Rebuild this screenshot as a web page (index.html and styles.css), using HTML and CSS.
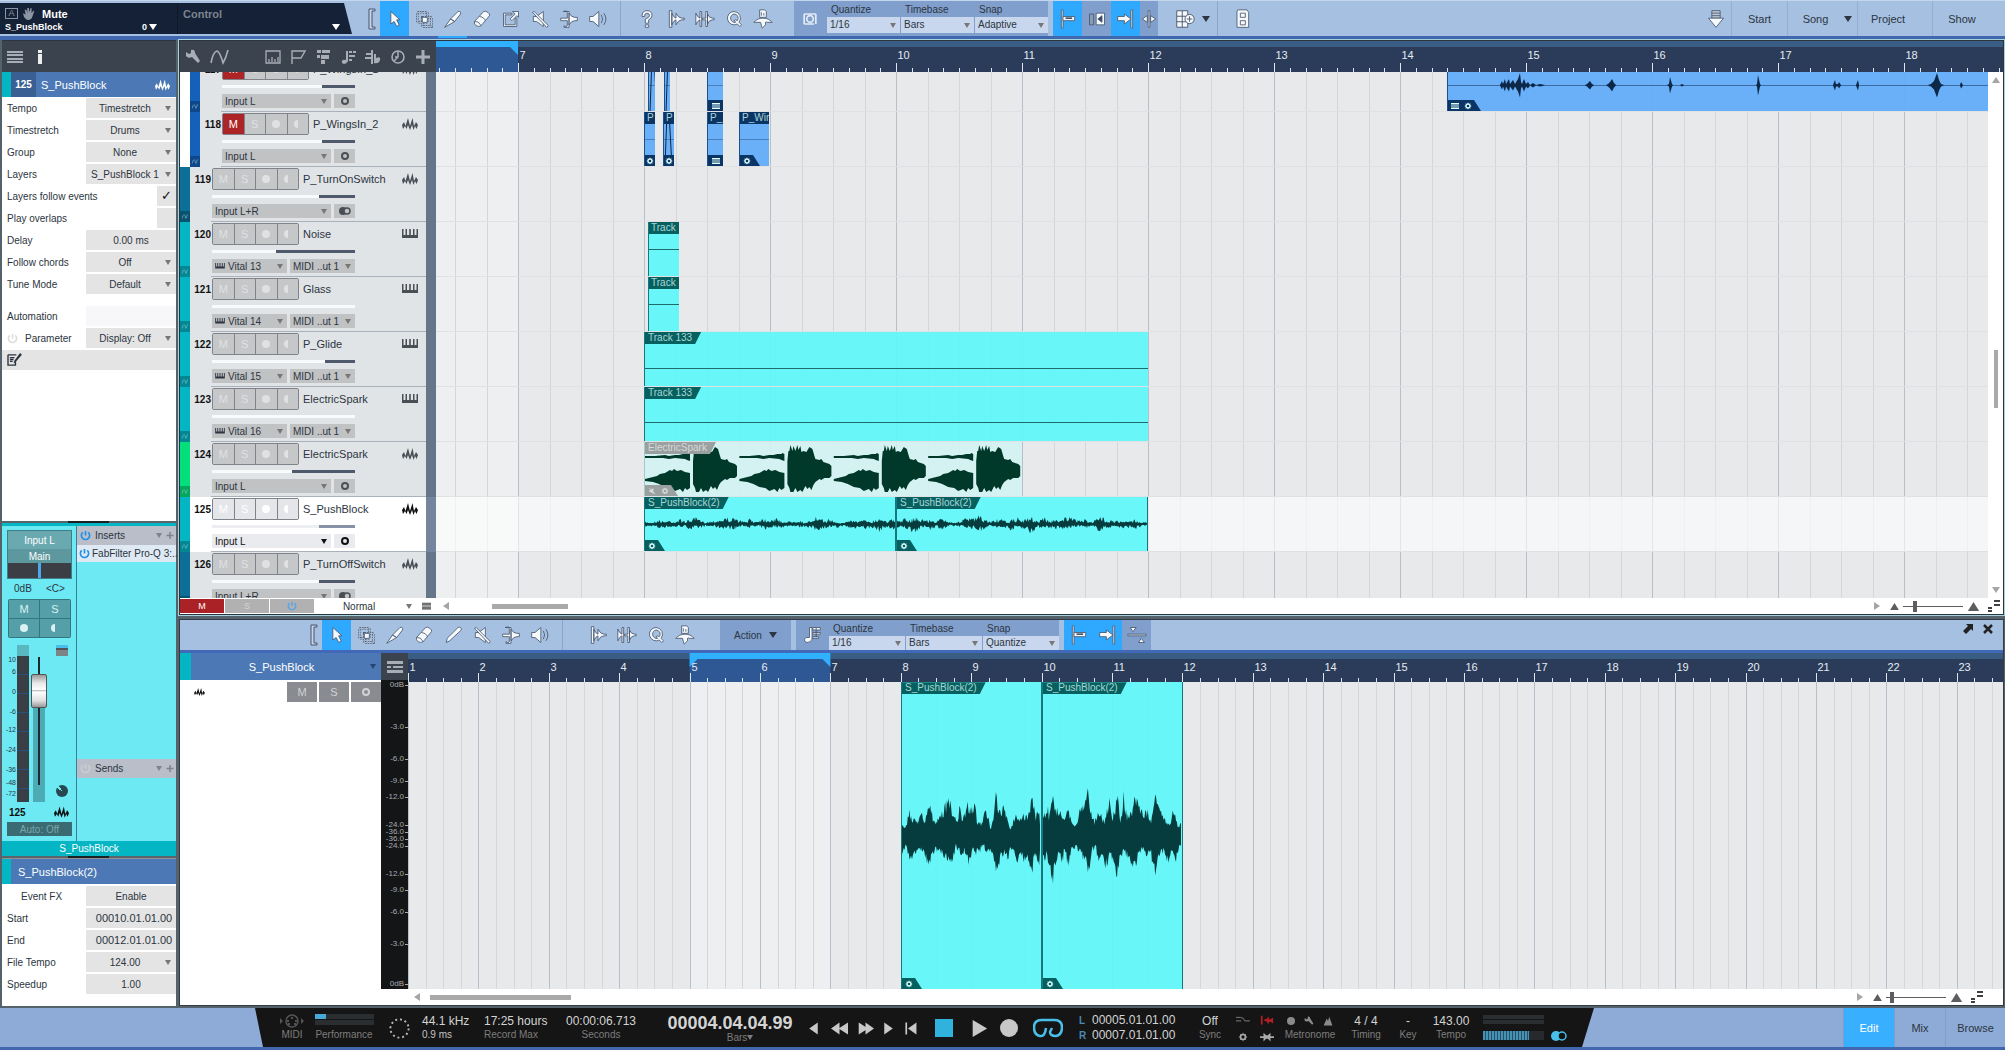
FILE: index.html
```html
<!DOCTYPE html>
<html lang="en">
  <head>
    <meta charset="UTF-8" />
    <title>S_PushBlock</title>
    <link rel="stylesheet" href="styles.css">
  </head>
  <body>
    <svg class="sprite" aria-hidden="true">
      <symbol id="i-bracket" viewBox="0 0 10 24"><path d="M8 2H2v20h6v-2H5V4h3z"/></symbol>
      <symbol id="i-cursor" viewBox="0 0 24 24"><path d="M7 3v15l4-3 3 6 3-2-3-6h4z"/></symbol>
      <symbol id="i-range" viewBox="0 0 24 24"><path d="M4 4h12v12H4z M10 10h11v11H10z" stroke-dasharray="2 1" fill="none" stroke-width="3"/><path d="M4 4h12v12H4z M10 10h11v11H10z" stroke-dasharray="2 1" fill="none" stroke="#dfe8f4" stroke-width="1"/><path d="M10 10h6v6h-6z"/></symbol>
      <symbol id="i-knife" viewBox="0 0 24 24"><path d="M2 22l7-10 5 3zM9 12l9-9q4-1 3 3l-7 9z"/></symbol>
      <symbol id="i-eraser" viewBox="0 0 24 24"><path d="M3 15L14 3q2-1 5 1t2 4L11 20q-3 2-6 0t-2-5zM9 9q6 1 7 5M3 15q5-1 8 5"/></symbol>
      <symbol id="i-pencil" viewBox="0 0 24 24"><path d="M4 21l1-5L18 3q2-1 3 0t1 3L8 19z"/></symbol>
      <symbol id="i-paint" viewBox="0 0 24 24"><path d="M3 5h10v2H5v12h12v-8h2v10H3z"/><path d="M14 3h7v7l-2-2-6 6-2-2 6-6z"/></symbol>
      <symbol id="i-mute" viewBox="0 0 24 24"><path d="M4 9h4l8-6v18l-8-6H4z"/><path d="M3 4l2-1 17 17-2 2z"/></symbol>
      <symbol id="i-bend" viewBox="0 0 24 24"><path d="M5 3q5-2 5 2v6H2v3h8v6q-2 3-4 0v2h6V5q3 5 7 5h3v4h-3q-4 0-7 5V3z"/></symbol>
      <symbol id="i-listen" viewBox="0 0 24 24"><path d="M2 9h4l7-6v18l-7-6H2z"/><path d="M16 7q3 5 0 10M19 5q5 7 0 14" fill="none"/></symbol>
      <symbol id="i-help" viewBox="0 0 24 24"><path d="M6 9q0-7 6-7t6 6q0 3-4 5v4h-4v-5q5-2 5-4 0-3-3-3t-3 4zM10 19h4v3h-4z"/></symbol>
      <symbol id="i-trans" viewBox="0 0 24 24"><path d="M4 2h3v20H4zM7 5q2 5 5 6V5q3 6 7 6h3v2h-3q-4 0-7 6v-6q-3 1-5 6z"/></symbol>
      <symbol id="i-strip" viewBox="0 0 24 24"><path d="M1 5q2 5 5 6V3h2v18H6v-8q-3 1-5 6zM9 11h4V3h2v18h-2v-8H9zM15 6q2 5 6 5h2v2h-2q-4 0-6 5z"/></symbol>
      <symbol id="i-q" viewBox="0 0 24 24"><path fill-rule="evenodd" d="M12 3a8 8 0 0 1 6 13l3 3-2 2-3-3A8 8 0 1 1 12 3zm0 3a5 5 0 1 0 2 10l-2-2 2-1 2 1a5 5 0 0 0-4-8z"/></symbol>
      <symbol id="i-bars" viewBox="0 0 24 24"><path d="M8 1h6l2 2v7H8z"/><path d="M10 4v4M13 5v3"/><path d="M1 16q4-5 11-5t11 5h-6q-1-1-2 0v3l-4 4-2-7H1z"/></symbol>
      <symbol id="i-down" viewBox="0 0 24 24"><path d="M7 2h10v9H7z" fill="#c0c9d6"/><path d="M7 5h10M7 8h10"/><path d="M7 11h10 4l-9 11-9-11z"/></symbol>
      <symbol id="i-iq" viewBox="0 0 24 24"><path d="M5 6v12M5 6h14M12 8a4 4 0 1 0 .1 0M19 6v12M5 18h12" fill="none" stroke-width="2" stroke="#e4ecf6"/></symbol>
      <symbol id="i-note" viewBox="0 0 24 24"><path d="M9 3h3v14q-1 4-6 4-4-1-3-4t6-2z"/><path d="M13 3h9v3h-9zM13 9h9v2h-9zM13 14h7v2h-7zM17 3v12"/></symbol>
      <symbol id="i-snapl" viewBox="0 0 24 24"><path d="M4 1h2v22H4z"/><path d="M6 9h14v5H6z"/><path d="M9 11h8" stroke-width="2"/></symbol>
      <symbol id="i-snapr" viewBox="0 0 24 24"><path d="M18 1h2v22h-2z"/><path d="M2 9h8V6l8 6-8 6v-4H2z"/></symbol>
      <symbol id="i-scroll" viewBox="0 0 24 24"><path d="M3 6h5v13H3z" fill="#8a9bb5"/><path d="M11 5h10v14H11z"/><path d="M18 8l-5 4 5 4z" fill="#3b4a60"/></symbol>
      <symbol id="i-split" viewBox="0 0 24 24"><path d="M11 2h2v20h-2zM4 12l6-4v8zM20 12l-6-4v8z"/></symbol>
      <symbol id="i-grid" viewBox="0 0 24 24"><path d="M3 3h12v18H3zM3 9h12M3 15h12M9 3v18"/><circle cx="17" cy="12" r="5"/><path d="M17 9v6M14 12h6"/></symbol>
      <symbol id="i-pads" viewBox="0 0 24 24"><path d="M7 1h11l2 3v18H6V3z"/><path d="M10 5h6v5h-6zM10 14h6v5h-6z"/></symbol>
      <symbol id="i-level" viewBox="0 0 24 24"><path d="M1 11h22v2H1zM4 3h7l-4 5zM14 21h7l-4-5z"/></symbol>
      <symbol id="i-wrench" viewBox="0 0 16 16"><path d="M1 3l3 2 2-1V1q4-1 4 3l5 8-2 2-6-6Q3 10 1 7z"/></symbol>
      <symbol id="i-curve" viewBox="0 0 20 16"><path d="M1 14Q3 3 7 2q3 1 6 12 3-5 5-13" fill="none" stroke="currentColor" stroke-width="1.6"/></symbol>
      <symbol id="i-ruler" viewBox="0 0 16 16"><path d="M1 2h14v12H1zM4 13v-3M7 13V8M10 13v-3M13 13V8" fill="none" stroke="currentColor" stroke-width="1.300"/></symbol>
      <symbol id="i-flag" viewBox="0 0 16 16"><path d="M2 15V2h13l-4 7H2" fill="none" stroke="currentColor" stroke-width="1.4"/></symbol>
      <symbol id="i-arr" viewBox="0 0 16 16"><path d="M2 1h4v3H2zM7 1h8v3H7zM6 6h8v4H6zM2 6h3v3H2zM6 11h4v4H6z"/></symbol>
      <symbol id="i-chord" viewBox="0 0 16 16"><path d="M6 2h2v9q0 3-4 4-3-1-2-3t4-1zM9 2h3v2H9zM13 2h3v2h-3zM9 6h6v2H9zM9 10h3v2H9z"/></symbol>
      <symbol id="i-sig" viewBox="0 0 16 16"><path d="M6 1h2v14H6zM1 4h5v2H1zM0 8h6v2H0zM9 5h2v4q5-2 4 2t-6 3z"/></symbol>
      <symbol id="i-clock" viewBox="0 0 16 16"><circle cx="8" cy="8" r="6" fill="none" stroke="currentColor" stroke-width="1.6"/><path d="M8 2v6l-4 4M8 8h-3" fill="none" stroke="currentColor" stroke-width="1.500"/></symbol>
      <symbol id="i-plus" viewBox="0 0 16 16"><path d="M6.500 1h3v5.500H15v3H9.500V15h-3V9.500H1v-3h5.500z"/></symbol>
      <symbol id="i-menu" viewBox="0 0 16 16"><path d="M0 2h16v2H0zM0 5h16v2H0zM0 9h16v2H0zM0 12h16v2H0z"/></symbol>
      <symbol id="i-info" viewBox="0 0 16 16"><path d="M6 1h4v3H6zM6 5h4v10H6z"/></symbol>
      <symbol id="i-wave" viewBox="0 0 16 12"><path d="M0 7l2-3 1.500 4L6 0l2 8 2.500-8 1.500 8 2-4 2 3-1.500 4-1.500-3-1.500 4L10 7l-2 5-2-5-1.500 4L3 8l-2 3z"/></symbol>
      <symbol id="i-keys" viewBox="0 0 16 10"><path d="M0 0h1.500v6h2V0H5v6h2.200V0h1.600v6H11V0h1.500v6h2V0H16v9H0z"/></symbol>
      <symbol id="i-power" viewBox="0 0 12 12"><path d="M3 2.5a4.5 4.5 0 1 0 6 0M6 1v5" fill="none" stroke="currentColor" stroke-width="1.8"/></symbol>
      <symbol id="i-hand" viewBox="0 0 14 14"><path d="M0 6l2 1 1 1-1-6h2l1 4V0h2v5l2-5h1l0 6 2-3 1 1-2 6q-1 4-5 4-3 0-5-4z"/></symbol>
      <symbol id="i-notes" viewBox="0 0 16 14"><path d="M1 2h9M1 2v11h8V9M3 5h5M3 7h4M3 9h3" fill="none" stroke="currentColor" stroke-width="1.500"/><path d="M14 0l2 2-7 8-2 1 1-3z"/></symbol>
      <symbol id="i-gear" viewBox="0 0 12 12"><circle cx="6" cy="6" r="3" fill="none" stroke="currentColor" stroke-width="2"/><path d="M6 1v2M6 9v2M1 6h2M9 6h2M2.500 2.500l1 1M8.500 8.500l1 1M9.500 2.500l-1 1M2.500 9.500l1-1" stroke="currentColor"/></symbol>
      <symbol id="i-tri" viewBox="0 0 10 8"><path d="M0 8h10L5 0z"/></symbol>
      <symbol id="i-zoomv" viewBox="0 0 12 12"><path d="M6 0h6v2H6zM6 4h6v2H6zM0 7h4v2H0zM0 10h4v2H0z"/></symbol>
    </svg>

    <header class="topbar">
      <div class="display">
        <div class="display-cell">
          <div class="display-row">
            <span class="box-a">A</span><svg class="hand"><use href="#i-hand"/></svg><b>Mute</b>
          </div>
          <div class="display-row small"><b>S_PushBlock</b><b class="end">0</b><i class="down"></i></div>
        </div>
        <div class="display-cell">
          <div class="display-row dim"><b>Control</b></div>
          <div class="display-row small"><i class="down end"></i></div>
        </div>
      </div>
      <div class="tools" data-tools="cursor range knife eraser paint mute bend listen | help trans strip q bars"></div>
      <div class="quant">
        <button class="quant-icon" aria-label="Input quantize"><svg><use href="#i-iq"/></svg></button>
        <label class="field">Quantize<span class="pick"><select><option>1/16</option></select></span></label>
        <label class="field">Timebase<span class="pick"><select><option>Bars</option></select></span></label>
        <label class="field">Snap<span class="pick"><select><option>Adaptive</option></select></span></label>
      </div>
      <div class="snaps">
        <button class="on" aria-label="Snap to grid"><svg><use href="#i-snapl"/></svg></button>
        <button aria-label="Autoscroll"><svg><use href="#i-scroll"/></svg></button>
        <button class="on" aria-label="Snap to events"><svg><use href="#i-snapr"/></svg></button>
        <button class="slim" aria-label="Split view"><svg><use href="#i-split"/></svg></button>
      </div>
      <button class="plain gridbtn" aria-label="Grid"><svg><use href="#i-grid"/></svg><i class="down"></i></button>
      <button class="plain padbtn" aria-label="Pads"><svg><use href="#i-pads"/></svg></button>
      <nav class="pages">
        <button class="plain" aria-label="Install"><svg><use href="#i-down"/></svg></button>
        <button>Start</button>
        <button class="song">Song <i class="down"></i></button>
        <button class="project">Project</button>
        <button class="show">Show</button>
      </nav>
    </header>

    <main class="workspace">
      <aside class="inspector">
        <div class="bar"><svg><use href="#i-menu"/></svg><svg class="lit"><use href="#i-info"/></svg></div>
        <h2 class="title"><b>125</b>S_PushBlock<svg><use href="#i-wave"/></svg></h2>
        <div class="props">
          <label>Tempo<span class="pick"><select><option>Timestretch</option></select></span></label>
          <label>Timestretch<span class="pick"><select><option>Drums</option></select></span></label>
          <label>Group<span class="pick"><select><option>None</option></select></span></label>
          <label>Layers<span class="pick"><select><option>S_PushBlock 1</option></select></span></label>
          <label>Layers follow events<input type="checkbox" checked></label>
          <label>Play overlaps<input type="checkbox"></label>
          <label>Delay<input type="text" value="0.00 ms"></label>
          <label>Follow chords<span class="pick"><select><option>Off</option></select></span></label>
          <label>Tune Mode<span class="pick"><select><option>Default</option></select></span></label>
          <label class="spaced">Automation<input class="faint" type="text" value=""></label>
          <label><span class="param"><svg><use href="#i-power"/></svg>Parameter</span><span class="pick"><select><option>Display: Off</option></select></span></label>
          <div class="notes"><svg><use href="#i-notes"/></svg></div>
        </div>
        <div class="grip"></div>
        <section class="channel">
          <div class="strip">
            <div class="io"><button>Input L</button><button>Main</button><div class="pan"></div></div>
            <div class="db"><span>0dB</span><span>&lt;C&gt;</span></div>
            <div class="ms"><button>M</button><button>S</button><button aria-label="Record"><i class="dot"></i></button><button aria-label="Monitor"><i class="half"></i></button></div>
            <div class="fader-area">
              <div class="fader-scale"></div>
              <div class="meter"></div>
              <input class="fader" type="range" min="0" max="127" value="108" aria-label="Volume">
              <div class="fader-side"><i class="bank"></i><i class="knob"></i></div>
            </div>
            <div class="strip-id"><b>125</b><svg><use href="#i-wave"/></svg></div>
            <button class="auto">Auto: Off</button>
          </div>
          <div class="rack">
            <div class="rack-head"><svg><use href="#i-power"/></svg>Inserts<i class="down end"></i><svg class="add"><use href="#i-plus"/></svg></div>
            <div class="insert"><svg><use href="#i-power"/></svg><span>FabFilter Pro-Q 3:..</span></div>
            <div class="rack-head sends"><svg><use href="#i-power"/></svg>Sends<i class="down end"></i><svg class="add"><use href="#i-plus"/></svg></div>
          </div>
          <div class="channel-name">S_PushBlock</div>
        </section>
        <div class="grip grey"></div>
        <h2 class="title event-title">S_PushBlock(2)</h2>
        <div class="props event-props">
          <label><span class="fx">Event FX</span><button>Enable</button></label>
          <label>Start<input class="time" type="text" value="00010.01.01.00"></label>
          <label>End<input class="time" type="text" value="00012.01.01.00"></label>
          <label>File Tempo<span class="pick"><select><option>124.00</option></select></span></label>
          <label>Speedup<input type="text" value="1.00"></label>
        </div>
      </aside>

      <section class="arrange">
        <div class="arrange-head">
          <div class="bar track-tools">
            <svg><use href="#i-wrench"/></svg><svg class="wide"><use href="#i-curve"/></svg>
            <svg class="end"><use href="#i-ruler"/></svg><svg><use href="#i-flag"/></svg><svg><use href="#i-arr"/></svg><svg><use href="#i-chord"/></svg><svg><use href="#i-sig"/></svg><svg><use href="#i-clock"/></svg><svg><use href="#i-plus"/></svg>
          </div>
          <svg class="ruler" id="arrangeRuler"></svg>
        </div>
        <div class="arrange-body">
          <div class="track-list" id="trackList"></div>
          <div class="lanes" id="lanes"></div>
          <div class="vscroll"><i class="up"></i><span></span><i class="down"></i></div>
        </div>
        <div class="arrange-foot">
          <button class="m">M</button><button>S</button><button aria-label="Automation power"><svg><use href="#i-power"/></svg></button>
          <span class="pick size"><select aria-label="Track height"><option>Normal</option></select></span>
          <svg class="list"><use href="#i-menu"/></svg>
          <div class="hscroll"><i class="left"></i><span></span><i class="right end"></i></div>
          <div class="zoom"><svg><use href="#i-tri"/></svg><input type="range" value="18" aria-label="Zoom"><svg class="big"><use href="#i-tri"/></svg><svg class="zv"><use href="#i-zoomv"/></svg></div>
        </div>
      </section>

      <section class="editor">
        <div class="editor-tools">
          <div class="tools" data-tools="cursor range knife eraser pencil mute bend listen | trans strip q bars"></div>
          <button class="action">Action <i class="down"></i></button>
          <div class="quant">
            <button class="quant-icon" aria-label="Note quantize"><svg><use href="#i-note"/></svg></button>
            <label class="field">Quantize<span class="pick"><select><option>1/16</option></select></span></label>
            <label class="field">Timebase<span class="pick"><select><option>Bars</option></select></span></label>
            <label class="field">Snap<span class="pick"><select><option>Quantize</option></select></span></label>
          </div>
          <div class="snaps">
            <button class="on" aria-label="Snap to grid"><svg><use href="#i-snapl"/></svg></button>
            <button class="on" aria-label="Snap to events"><svg><use href="#i-snapr"/></svg></button>
            <button aria-label="Level"><svg><use href="#i-level"/></svg></button>
          </div>
          <div class="window-buttons">
            <button aria-label="Detach"><svg viewBox="0 0 10 10"><path d="M3 0h7v7L8 5 3 10 0 7l5-5z"/></svg></button>
            <button aria-label="Close"><svg viewBox="0 0 10 10"><path d="M1 1l8 8M9 1L1 9" stroke="#222" stroke-width="2.500"/></svg></button>
          </div>
        </div>
        <div class="editor-body">
          <div class="editor-side">
            <h2>S_PushBlock<i class="down"></i></h2>
            <div class="editor-ms"><svg><use href="#i-wave"/></svg><button>M</button><button>S</button><button aria-label="Monitor"><i class="ring"></i></button></div>
          </div>
          <div class="db-col">
            <div class="bar"><svg viewBox="0 0 16 14"><path d="M0 1h16v3H0zM0 6h4v2H0zM6 6h10v2H6zM0 10h16v3H0z"/></svg></div>
            <div class="db-scale" id="dbScale"></div>
          </div>
          <div class="editor-view">
            <svg class="ruler" id="editorRuler"></svg>
            <div class="editor-lane" id="editorLane"></div>
            <div class="editor-foot">
              <div class="hscroll"><i class="left"></i><span></span><i class="right end"></i></div>
              <div class="zoom"><svg><use href="#i-tri"/></svg><input type="range" value="8" aria-label="Zoom"><svg class="big"><use href="#i-tri"/></svg><svg class="zv"><use href="#i-zoomv"/></svg></div>
            </div>
          </div>
        </div>
      </section>
    </main>

    <footer class="transport">
      <div class="transport-panel">
        <div class="cell midi"><svg viewBox="0 0 26 14"><circle cx="13" cy="7" r="6" fill="none" stroke="#555" stroke-width="1.500"/><path d="M1 4v6l3-3zM22 4v6l3-3z" fill="#555"/><g fill="#666"><circle cx="9" cy="7" r="1"/><circle cx="17" cy="7" r="1"/><circle cx="10" cy="10" r="1"/><circle cx="16" cy="10" r="1"/><circle cx="13" cy="4" r="1"/></g></svg><small>MIDI</small></div>
        <div class="cell perf"><span class="load"><i></i></span><small>Performance</small></div>
        <div class="cell circle"><svg viewBox="0 0 24 24"><circle cx="12" cy="12" r="9.500" fill="none" stroke="#bbb" stroke-width="2" stroke-dasharray="2 3"/></svg></div>
        <div class="cell left rate"><span>44.1 kHz</span><small class="bright">0.9 ms</small></div>
        <div class="cell left hours"><span>17:25 hours</span><small>Record Max</small></div>
        <div class="cell secs"><span>00:00:06.713</span><small>Seconds</small></div>
        <div class="cell counter"><strong>00004.04.04.99</strong><small>Bars<i class="down"></i></small></div>
        <div class="buttons">
          <button aria-label="Previous"><svg viewBox="0 0 20 20"><path d="M15 3v14L5 10z"/></svg></button>
          <button aria-label="Rewind"><svg viewBox="0 0 20 20"><path d="M10 3v14L0 10zM20 3v14L9 10z"/></svg></button>
          <button aria-label="Forward"><svg viewBox="0 0 20 20"><path d="M2 3v14l11-7zM10 3v14l10-7z"/></svg></button>
          <button class="b20" aria-label="Next"><svg viewBox="0 0 20 20"><path d="M5 3v14l10-7z"/></svg></button>
          <button class="b24" aria-label="Return to zero"><svg viewBox="0 0 20 20"><path d="M4 3h2v14H4zM17 3v14L7 10z"/></svg></button>
          <button class="b44" aria-label="Stop"><svg viewBox="0 0 20 20"><path d="M1 1h18v18H1z" fill="#2fb2dd"/></svg></button>
          <button aria-label="Play"><svg viewBox="0 0 20 20"><path d="M2 0v20l17-10z"/></svg></button>
          <button class="b34" aria-label="Record"><svg viewBox="0 0 20 20"><circle cx="10" cy="10" r="9"/></svg></button>
          <button class="b44 loop" aria-label="Loop"><svg viewBox="0 0 30 20"><path d="M7 18q5 1 6-8M7 18q-6-1-6-9 0-7 8-7h12q8 0 8 7 0 8-6 9-6 0-6-4l2-4" fill="none" stroke="#49c0ea" stroke-width="2.500"/></svg></button>
        </div>
        <div class="locators"><div><b>L</b>00005.01.01.00</div><div><b>R</b>00007.01.01.00</div></div>
        <div class="cell sync"><span>Off</span><small>Sync</small></div>
        <div class="mini">
          <svg viewBox="0 0 16 10"><path d="M0 2h5q4 0 5 4h6M0 6h6" fill="none" stroke="#888"/></svg>
          <svg viewBox="0 0 16 10"><path d="M1 0h2v10H1zM5 4h2l3-3v3h2l3-2v7l-3-2h-2v3L7 6H5z" fill="#b51f24"/></svg>
          <svg viewBox="0 0 12 12" color="#aaa"><use href="#i-gear"/></svg>
          <svg viewBox="0 0 16 10"><path d="M0 4h4V0l3 3h2l3-3v4h4v2h-4v4L9 7H7l-3 3V6H0z" fill="#aaa"/></svg>
        </div>
        <div class="cell metro"><span class="trio"><i class="dot"></i><svg><use href="#i-wrench"/></svg><svg viewBox="0 0 16 16"><path d="M1 15L6 4l2 4 2-7 5 14z"/></svg></span><small>Metronome</small></div>
        <div class="cell timing"><span>4 / 4</span><small>Timing</small></div>
        <div class="cell key"><span>-</span><small>Key</small></div>
        <div class="cell tempo"><span>143.00</span><small>Tempo</small></div>
        <div class="out"><span class="bars"></span><span class="vol"></span><svg viewBox="0 0 16 10"><circle cx="5" cy="5" r="5" fill="#49c0ea"/><circle cx="11" cy="5" r="4" fill="#151515" stroke="#49c0ea" stroke-width="1.500"/></svg></div>
      </div>
      <nav class="views"><button class="active">Edit</button><button>Mix</button><button>Browse</button></nav>
    </footer>
    <script src="script.js"></script>
  </body>
</html>
```

FILE: styles.css
```css
* {
  box-sizing: border-box;
}
body {
  margin: 0;
  height: 100vh;
  display: flex;
  flex-direction: column;
  overflow: hidden;
  background: #53626b;
  color: #2c3540;
  font: 10px "Liberation Sans", Arial, sans-serif;
}
.sprite {
  display: none;
}
svg {
  display: block;
  flex: none;
  fill: currentColor;
}
button, select, input {
  font: inherit;
  color: inherit;
  margin: 0;
  padding: 0;
  border: 0;
  border-radius: 0;
  background: none;
  appearance: none;
  min-width: 0;
}
button {
  display: flex;
  align-items: center;
  justify-content: center;
}
h2 {
  margin: 0;
  font-weight: normal;
  font-size: 11px;
}
.end {
  margin-left: auto;
}

/* little triangles */
i.down, i.up, i.left, i.right {
  width: 0;
  height: 0;
  flex: none;
  border: 4px solid transparent;
}
i.down {
  border-top: 6px solid;
  border-bottom: 0;
}
i.up {
  border-bottom: 6px solid;
  border-top: 0;
}
i.left {
  border-right: 6px solid;
  border-left: 0;
}
i.right {
  border-left: 6px solid;
  border-right: 0;
}
i.dot, i.half, i.ring {
  width: 8px;
  height: 8px;
  border-radius: 50%;
  background: currentColor;
}
i.half {
  background: linear-gradient(90deg, currentColor 50%, transparent 50%);
}
i.ring {
  background: none;
  border: 2px solid;
}
.pick {
  position: relative;
  display: flex;
}
.pick select {
  width: 100%;
  padding: 0 14px 0 3px;
}
.pick::after {
  content: "";
  position: absolute;
  right: 4px;
  top: 50%;
  margin-top: -2px;
  border: 3px solid transparent;
  border-top: 5px solid #777;
  border-bottom: 0;
  pointer-events: none;
}

/* top toolbar */
.topbar {
  display: flex;
  height: 40px;
  flex: none;
  background: #a6c0e2;
  border-top: 1px solid #c4d5ee;
  border-bottom: 4px solid #4167ae;
}
.display {
  display: flex;
  width: 352px;
  height: 31px;
  margin: 2px 12px 0 0;
  background: #152136;
  color: #fff;
  clip-path: polygon(0 0, 344px 0, 100% 100%, 0 100%);
}
.display-cell {
  width: 177px;
  padding: 4px 20px 0 5px;
}
.display-cell + .display-cell {
  border-left: 1px solid #0f1828;
  width: 175px;
  padding-right: 12px;
}
.display-row {
  display: flex;
  align-items: center;
  gap: 5px;
  height: 13px;
  font-size: 11px;
}
.display-row.small {
  font-size: 9px;
  gap: 2px;
}
.display-row.dim {
  color: #7c8490;
}
.box-a {
  width: 13px;
  height: 11px;
  border: 1px solid #8b95a3;
  color: #8b95a3;
  font-size: 9px;
  line-height: 9px;
  text-align: center;
}
.hand {
  width: 12px;
  height: 12px;
  margin-right: 2px;
  color: #8b95a3;
}
.tools {
  display: flex;
}
.tools button {
  width: 29px;
  height: 35px;
}
.tools button.bracket {
  width: 16px;
}
.tools button.on, .snaps .on {
  background: #2fa9ff;
}
.topbar .tools button[aria-label="knife"] {
  box-shadow: 0 2px #2fa9ff;
}
.tools svg, .quant-icon svg, .snaps svg, .plain svg {
  width: 20px;
  height: 20px;
  fill: #f6f9fc;
  stroke: #46556c;
  stroke-width: 1;
}
.tools .bracket svg {
  width: 10px;
  height: 24px;
  fill: #c6d5ea;
}
.tools hr {
  width: 1px;
  height: 100%;
  margin: 0 11px 0 8px;
  border: 0;
  background: #8ba6cd;
}
.quant {
  display: flex;
  gap: 1px;
  margin-left: 17px;
  background: #809fcd;
}
.quant-icon {
  width: 32px;
}
.field {
  width: 73px;
  padding: 2px 0 0 4px;
  line-height: 14px;
}
.field .pick {
  margin-left: -4px;
}
.field .pick select {
  height: 16px;
  background: #c8d7ed;
}
.snaps {
  display: flex;
  margin-left: 5px;
}
.snaps button {
  width: 29px;
  background: #809fcd;
}
.snaps .slim {
  width: 18px;
}
.gridbtn {
  width: 60px;
  gap: 6px;
  padding-left: 8px;
  border-right: 1px solid #8ba6cd;
}
.gridbtn svg {
  width: 22px;
  height: 22px;
}
.padbtn {
  width: 47px;
}
.pages {
  display: flex;
  margin-left: auto;
  font-size: 11px;
}
.pages button {
  width: 56px;
  border-left: 1px solid #94aed4;
}
.pages .plain {
  width: 30px;
  border: 0;
}
.pages .song {
  width: 70px;
  gap: 16px;
  padding-left: 10px;
}
.pages .project {
  width: 75px;
  padding-right: 14px;
}
.pages .show {
  width: 73px;
  padding-right: 14px;
}

/* panels */
.workspace {
  flex: 1;
  min-height: 0;
  display: grid;
  grid-template-columns: 175px 1fr;
  grid-template-rows: 299fr 201fr;
  gap: 4px 3px;
  padding: 0 1px 2px 1px;
}
.inspector {
  grid-row: 1 / 3;
  display: flex;
  flex-direction: column;
  min-width: 0;
  border-top: 1px solid #2d343c;
  margin-left: 1px;
  background: #fff;
}
.bar {
  display: flex;
  align-items: center;
  height: 31px;
  flex: none;
  background: #3b434f;
  color: #a9adb5;
}
.bar svg {
  width: 16px;
  height: 16px;
}
.inspector .bar {
  gap: 9px;
  padding-left: 5px;
}
.bar .lit {
  color: #eee;
}
.title {
  display: flex;
  align-items: center;
  height: 25px;
  flex: none;
  background: #4c79b5;
  border-left: 9px solid #04b5c4;
  color: #fff;
}
.title b {
  width: 25px;
  margin-right: 5px;
  background: #3a5f92;
  line-height: 25px;
  font-size: 10px;
  text-align: center;
}
.title svg {
  width: 15px;
  height: 12px;
  margin: 0 6px 0 auto;
}
.event-title {
  padding-left: 7px;
}
.props {
  flex: 1;
  display: flex;
  flex-direction: column;
  gap: 2px;
  padding-top: 1px;
}
.props label {
  display: flex;
  align-items: center;
  justify-content: space-between;
  height: 20px;
  padding-left: 5px;
}
.props .spaced {
  margin-top: 10px;
}
.props .pick, .props input, .props button {
  width: 90px;
  height: 20px;
  background: #e4e4e4;
  text-align: center;
}
.props .pick select {
  text-align-last: center;
  padding: 0 12px 0 0;
}
.props .pick::after {
  right: 5px;
  border-width: 5px 3px 0;
}
.props input[type="checkbox"] {
  width: 19px;
}
.props input[type="checkbox"]:checked::after {
  content: "✓";
  font: bold 13px/20px "DejaVu Sans", sans-serif;
  color: #111;
}
.props .faint {
  background: #f7f7f9;
}
.props .time {
  font-size: 11px;
  padding-left: 6px;
}
.param {
  display: flex;
  gap: 7px;
}
.param svg {
  width: 11px;
  height: 11px;
  color: #ddd;
}
.fx {
  padding-left: 14px;
}
.notes {
  height: 20px;
  padding: 3px 5px;
  background: #e4e4e4;
}
.notes svg {
  width: 15px;
  height: 13px;
}
.event-props {
  flex: none;
  height: 122px;
  padding-top: 2px;
}
.grip {
  height: 5px;
  flex: none;
  border-top: 2px dotted #222;
  border-image: linear-gradient(90deg, #59656b 38%, #1c2023 38%, #1c2023 61%, #59656b 61%) 2;
  background: #04b5c4;
}
.grip.grey {
  height: 3px;
  background: #8d9296;
}

/* channel strip */
.channel {
  flex: none;
  display: grid;
  grid-template-columns: 75px minmax(0, 1fr);
  grid-template-rows: 315px 15px;
  background: #6de9f4;
}
.strip {
  display: flex;
  flex-direction: column;
  padding: 4px 4px 0 5px;
  border-right: 1px solid #3a7f9a;
}
.io button {
  width: 100%;
  height: 18px;
  background: #69a9af;
  color: #fff;
}
.io button + button {
  height: 14px;
  background: #5d989f;
}
.io {
  border: 1px solid #3c7f88;
}
.pan {
  height: 15px;
  background: linear-gradient(90deg, #3b3f45 47%, #4fa8ec 47%, #4fa8ec 53%, #3b3f45 53%);
}
.db {
  display: flex;
  justify-content: space-around;
  padding: 4px 0;
  line-height: 12px;
}
.ms {
  display: grid;
  grid-template-columns: 1fr 1fr;
  gap: 1px;
  margin: 0 1px;
  padding: 1px;
  background: #34757f;
  border-radius: 2px;
}
.ms button {
  height: 18px;
  background: #55a0a8;
  color: #d9f1f3;
  font-size: 11px;
}
.fader-area {
  flex: 1;
  display: flex;
  padding-top: 7px;
}
.fader-scale {
  position: relative;
  width: 9px;
  font-size: 7px;
}
.fader-scale span {
  position: absolute;
  right: 0;
  line-height: 8px;
}
.meter {
  width: 12px;
  margin-left: 1px;
  border-top: 11px solid #59b7bf;
  background: repeating-linear-gradient(#3a3e45 0 18px, #27507c 18px 19px);
}
.fader {
  width: 16px;
  margin: 12px 0 0 2px;
  writing-mode: vertical-lr;
  direction: rtl;
  background: linear-gradient(90deg, transparent 7px, #1d2b30 7px, #1d2b30 9px, transparent 9px) no-repeat 0 0 / 100% 128px,
    linear-gradient(90deg, transparent 2px, #4dabb5 2px, #4dabb5 14px, transparent 14px) no-repeat 0 50px;
}
.fader::-webkit-slider-thumb {
  appearance: none;
  width: 16px;
  height: 34px;
  border: 1px solid #555;
  border-radius: 2px;
  background: linear-gradient(#999, #e8e8e8 25%, #fff 48%, #777 49%, #fff 52%, #e0e0e0 80%, #999);
}
.fader-side {
  flex: 1;
  display: flex;
  flex-direction: column;
  justify-content: space-between;
  align-items: center;
  padding: 0 0 5px 4px;
}
.bank {
  width: 12px;
  height: 11px;
  background: linear-gradient(#49c0ea 30%, #555 30%, #555 42%, #7d8488 42%);
}
.knob {
  width: 12px;
  height: 12px;
  border-radius: 50%;
  background: conic-gradient(#27484e 300deg, #6de9f4 300deg 330deg, #27484e 330deg);
}
.strip-id {
  display: flex;
  align-items: center;
  justify-content: space-between;
  padding: 0 3px 0 2px;
  height: 20px;
  color: #111;
}
.strip-id svg {
  width: 15px;
  height: 12px;
}
.auto {
  height: 14px;
  margin: 0 0 5px;
  background: #3a6b72;
  color: #79a7ad;
}
.rack {
  display: flex;
  flex-direction: column;
  min-width: 0;
}
.rack-head, .insert {
  display: flex;
  align-items: center;
  gap: 4px;
  height: 19px;
  padding: 0 2px 0 3px;
  background: #b9bec9;
  white-space: nowrap;
}
.rack svg {
  width: 11px;
  height: 11px;
  color: #2090e8;
}
.rack .add, .rack i.down {
  width: 8px;
  color: #7e848d;
}
.rack i.down {
  width: 0;
  border-width: 5px 3px 0;
}
.insert {
  gap: 2px;
  padding: 0 0 0 2px;
  height: 17px;
  background: #dfe9f3;
}
.sends {
  margin-top: auto;
  margin-bottom: 63px;
}
.sends svg:first-child {
  color: #c9cdd5;
}
.channel-name {
  grid-column: 1 / 3;
  background: #04b5c4;
  color: #fff;
  text-align: center;
  line-height: 15px;
}

/* arrangement */
.arrange {
  display: flex;
  flex-direction: column;
  min-height: 0;
  border: 1px solid #2d343c;
  box-shadow: 0 0 0 1px #a4d3de;
  background: #fff;
}
.arrange-head {
  display: flex;
}
.track-tools {
  width: 256px;
  gap: 9px;
  padding: 0 5px;
}
.bar .wide {
  width: 20px;
}
.ruler {
  flex: 1;
  height: 31px;
  background: linear-gradient(#3a5d84 6px, #2a3c59 6px);
  overflow: hidden;
}
.ruler text {
  fill: #e6ebf2;
  font-size: 11px;
}
.ruler line {
  stroke: #dfe5ec;
}
.arrange-body {
  flex: 1;
  min-height: 0;
  display: flex;
  overflow: hidden;
}
.track-list {
  width: 256px;
  margin-top: -15px;
}
.track {
  display: flex;
  height: 55px;
  background: #e0e4e7;
  border-right: 10px solid #65758a;
}
.track.child {
  border-left: 10px solid #fff;
}
.track.selected {
  background: #fff;
  border-right-color: #75859d;
}
.stripe {
  width: 10px;
  padding-top: 44px;
}
.stripe svg {
  width: 10px;
  height: 11px;
  padding: 3px 1px;
  background: rgba(0, 0, 0, .25);
  color: #9fd5e0;
}
.track-num {
  width: 21px;
  padding-top: 7px;
  color: #111;
  text-align: right;
}
.track-main {
  flex: 1;
  min-width: 0;
  padding: 1px 0 0 1px;
  border-bottom: 1px solid #a9b1ba;
}
.track-line {
  display: flex;
  align-items: center;
  height: 22px;
  font-size: 11px;
  white-space: nowrap;
}
.msrm {
  display: grid;
  grid-template-columns: repeat(4, 1fr);
  gap: 1px;
  width: 87px;
  height: 22px;
  margin-right: 4px;
  border: 1px solid #80848a;
  border-radius: 2px;
  background: #80848a;
}
.msrm button {
  background: #c5c7c9;
  color: #dfe1e3;
}
.msrm button.muted {
  background: #ad2427;
  color: #fff;
}
.track-line > svg {
  width: 16px;
  height: 12px;
  margin: 0 8px 0 auto;
  color: #4a4f56;
}
.volume {
  display: block;
  width: calc(100% - 71px);
  height: 3px;
  margin: 5px 0 6px;
  background: linear-gradient(90deg, #f8fafb var(--from), #4e5a6c var(--from));
}
.volume::-webkit-slider-thumb {
  appearance: none;
  width: 1px;
  height: 3px;
}
.inputs {
  display: flex;
  gap: 3px;
  margin-right: 71px;
}
.inputs .pick {
  flex: 1;
}
.inputs .midi-out {
  flex: 0 0 65px;
}
.inputs select {
  height: 14px;
  background: #c1c2c4;
}
.inputs .inst svg {
  position: absolute;
  left: 3px;
  top: 4px;
  width: 10px;
  height: 6px;
}
.inputs .inst select {
  padding-left: 16px;
}
.inputs .midi-out select {
  padding-right: 12px;
}
.inputs button {
  width: 21px;
  background: #c1c2c4;
  color: #4a4f56;
}
.inputs button svg {
  width: 14px;
  height: 9px;
}
.selected .inputs select, .selected .inputs button {
  background: #e9ebef;
  color: #111;
}
.selected .inputs .pick::after {
  border-top-color: #111;
}
.selected .msrm button {
  background: #e4e6ea;
  color: #fff;
}
.selected .volume {
  background: linear-gradient(90deg, #eceef2 var(--from), #8693a6 var(--from));
}
.selected .track-line > svg {
  color: #111;
}
.lanes {
  position: relative;
  flex: 1;
  min-width: 0;
  overflow: hidden;
  background: #e7e9eb;
}
.grid {
  position: absolute;
  inset: 0;
  width: 100%;
  height: 100%;
}
.grid line {
  stroke: #d3d7dc;
}
.grid .bar-line {
  stroke: #b9bfc8;
}
.lane-rows {
  margin-top: -15px;
}
.lane {
  position: relative;
  height: 55px;
  border-bottom: 1px solid #dfe1e4;
}
.lane.selected {
  background: rgba(255, 255, 255, .6);
}

/* events sit freely on the time canvas */
.event {
  position: absolute;
  top: 0;
  bottom: 0;
  overflow: hidden;
  background: rgba(95, 246, 249, .93);
  color: #063c3e;
  border-left: 1px solid #16777c;
}
.event.blue {
  background: rgba(98, 172, 250, .94);
  border-color: #1d4f8c;
  color: #0c2748;
}
.event.muted {
  background: rgba(210, 243, 243, .9);
  color: #00382a;
  border-color: #a6c9c9;
}
.event.audio {
  border-right: 1px solid #16777c;
}
.event svg.wave {
  position: absolute;
  inset: 0;
  width: 100%;
  height: 100%;
}
.mid {
  opacity: .75;
}
.blue .mid {
  opacity: .35;
}
.event-label {
  position: relative;
  display: inline-block;
  height: 12px;
  padding: 0 9px 0 3px;
  background: #06605f;
  color: #a8d6d6;
  line-height: 12px;
  white-space: nowrap;
  clip-path: polygon(0 0, 100% 0, calc(100% - 6px) 100%, 0 100%);
}
.event.short .event-label {
  display: block;
  clip-path: none;
  padding: 0 0 0 2px;
}
.blue .event-label, .blue .event-tag {
  background: #0b3565;
}
.muted .event-label, .muted .event-tag {
  background: #9a9f9f;
  color: #d5dada;
}
.event-tag {
  position: absolute;
  left: 0;
  bottom: 0;
  display: flex;
  gap: 5px;
  align-items: center;
  height: 11px;
  padding: 0 9px 0 3px;
  background: #06605f;
  color: #dff;
  clip-path: polygon(0 0, calc(100% - 7px) 0, 100% 100%, 0 100%);
}
.event.short .event-tag.full {
  width: 100%;
  padding: 0;
  justify-content: center;
  clip-path: none;
}
.event-tag svg {
  width: 8px;
  height: 8px;
}
.vscroll {
  display: flex;
  flex-direction: column;
  justify-content: space-between;
  align-items: center;
  width: 15px;
  padding: 5px 0;
  background: #fff;
  color: #a5a5a5;
}
.vscroll span {
  width: 4px;
  height: 58px;
  margin-top: 88px;
  background: #a9a9a9;
}
.arrange-foot, .editor-foot {
  display: flex;
  align-items: center;
  height: 16px;
  background: #fff;
}
.arrange-foot > button {
  width: 44px;
  height: 14px;
  margin-right: 1px;
  background: #b1b1b1;
  color: #d4d4d4;
  font-size: 9px;
}
.arrange-foot > button svg {
  width: 10px;
  height: 10px;
  color: #5aa5e6;
}
.arrange-foot > .m {
  background: #ab2226;
  color: #fff;
}
.size {
  width: 99px;
}
.size select {
  text-align-last: center;
}
.size::after {
  right: 2px;
}
.list {
  width: 9px;
  height: 10px;
  margin: 0 12px 0 8px;
  color: #444;
}
.hscroll {
  flex: 1;
  display: flex;
  align-items: center;
  color: #a5a5a5;
}
.hscroll span {
  width: 76px;
  height: 5px;
  margin-left: 43px;
  background: #a9a9a9;
}
.zoom {
  display: flex;
  align-items: center;
  gap: 4px;
  padding: 0 3px 0 10px;
  color: #5b5d61;
}
.zoom svg {
  width: 9px;
  height: 7px;
}
.zoom .big {
  width: 13px;
  height: 9px;
}
.zoom .zv {
  width: 12px;
  height: 12px;
  margin-left: 4px;
  color: #3e4043;
}
.zoom input {
  width: 60px;
  height: 11px;
  background: linear-gradient(transparent 5px, #5b5d61 5px, #5b5d61 6px, transparent 6px);
}
.zoom input::-webkit-slider-thumb {
  appearance: none;
  width: 4px;
  height: 11px;
  background: #5b5d61;
}

/* editor */
.editor {
  display: flex;
  flex-direction: column;
  min-height: 0;
  border: 1px solid #343b43;
  background: #fff;
}
.editor-tools {
  display: flex;
  height: 33px;
  flex: none;
  padding-left: 126px;
  background: #a6c0e2;
  border-bottom: 3px solid #4169b8;
}
.editor-tools .tools button {
  height: 30px;
}
.editor-tools .tools hr {
  margin-right: 20px;
}
.editor-tools .quant {
  margin-left: 5px;
}
.editor-tools .field {
  width: 76px;
}
.action {
  gap: 7px;
  width: 71px;
  margin-left: 21px;
  background: #809fcd;
  font-size: 10px;
}
.editor-tools .field .pick select {
  height: 14px;
}
.window-buttons {
  display: flex;
  gap: 10px;
  margin: 4px 10px 0 auto;
}
.window-buttons svg {
  width: 10px;
  height: 10px;
  fill: #222;
}
.window-buttons button {
  height: 10px;
}
.editor-body {
  flex: 1;
  min-height: 0;
  display: flex;
}
.editor-side {
  width: 201px;
}
.editor-side h2 {
  display: flex;
  align-items: center;
  justify-content: center;
  position: relative;
  height: 27px;
  padding-right: 9px;
  background: #4c79b5;
  border-left: 11px solid #04b5c4;
  color: #fff;
}
.editor-side h2 i {
  position: absolute;
  right: 5px;
  color: #25466f;
  border-width: 5px 3px 0;
}
.editor-ms {
  display: flex;
  gap: 2px;
  padding-top: 2px;
}
.editor-ms svg {
  width: 11px;
  height: 8px;
  margin: 6px auto 0 14px;
  color: #111;
}
.editor-ms button {
  width: 30px;
  height: 20px;
  background: #898b90;
  color: #d0d2d5;
  font-size: 11px;
}
.db-col {
  display: flex;
  flex-direction: column;
  width: 27px;
}
.db-col .bar {
  height: 27px;
  justify-content: center;
}
.db-scale {
  position: relative;
  flex: 1;
  margin-bottom: 16px;
  overflow: hidden;
  background: #141517;
}
.db-scale span {
  position: absolute;
  right: 0;
  height: 8px;
  padding-right: 4px;
  color: #a9abae;
  font-size: 8px;
  line-height: 8px;
  background: linear-gradient(#a9abae, #a9abae) no-repeat right 4px / 3px 1px;
}
.editor-view {
  flex: 1;
  min-width: 0;
  display: flex;
  flex-direction: column;
}
.editor-view .ruler {
  flex: none;
  width: 100%;
  height: 29px;
}
.editor-lane {
  position: relative;
  flex: 1;
  overflow: hidden;
  background: #e7e9eb;
}
.editor-foot {
  padding: 0 17px 0 6px;
}
.editor-foot .hscroll span {
  width: 141px;
  margin-left: 10px;
}

/* transport */
.transport {
  display: flex;
  height: 42px;
  flex: none;
  background: #8eabd7;
  border-bottom: 3px solid #4167ae;
}
.transport-panel {
  display: flex;
  align-items: center;
  width: 1339px;
  margin-left: 255px;
  padding: 1px 0 0 17px;
  background: #151515;
  color: #d4d4d4;
  clip-path: polygon(0 0, 100% 0, calc(100% - 12px) 100%, 8px 100%);
}
.cell {
  display: flex;
  flex-direction: column;
  align-items: center;
  font-size: 12px;
  line-height: 14px;
  white-space: nowrap;
}
.cell small {
  font-size: 10px;
  line-height: 14px;
  color: #7d7d7d;
}
.cell small.bright {
  color: #c4c4c4;
}
.cell.left {
  align-items: flex-start;
}
.midi {
  width: 40px;
}
.midi svg {
  width: 26px;
  height: 14px;
}
.perf {
  width: 64px;
}
.load {
  width: 59px;
  height: 11px;
  margin-bottom: 3px;
  background: linear-gradient(#2b2e31 5px, #151515 5px, #151515 6px, #2b2e31 6px);
}
.load i {
  display: block;
  width: 11px;
  height: 5px;
  background: #49a9d6;
}
.circle {
  width: 46px;
}
.circle svg {
  width: 23px;
  height: 23px;
}
.rate {
  width: 62px;
}
.hours {
  width: 76px;
}
.secs {
  width: 82px;
}
.counter {
  width: 158px;
  padding-left: 18px;
}
.counter strong {
  font-size: 18px;
  line-height: 18px;
}
.counter small {
  display: flex;
  align-items: center;
  line-height: 11px;
  padding-left: 20px;
}
.counter i.down {
  border-width: 5px 3px 0;
}
.buttons {
  display: flex;
  color: #c8c8c8;
}
.buttons button {
  width: 26px;
  height: 30px;
}
.buttons svg {
  width: 17px;
  height: 17px;
}
.buttons .b20 {
  width: 20px;
}
.buttons .b24 {
  width: 24px;
}
.buttons .b34 {
  width: 34px;
}
.buttons .b44 {
  width: 44px;
}
.buttons .b44 svg, .buttons .b34 svg {
  width: 20px;
  height: 20px;
}
.buttons .loop svg {
  width: 30px;
}
.locators {
  width: 116px;
  padding-left: 9px;
  font-size: 12px;
  line-height: 14px;
}
.locators b {
  display: inline-block;
  width: 13px;
  color: #4a88b6;
  font-size: 10px;
}
.sync {
  width: 48px;
}
.mini {
  display: grid;
  grid-template-columns: 1fr 1fr;
  justify-items: center;
  gap: 7px 5px;
  width: 42px;
}
.mini svg {
  width: 14px;
  height: 10px;
}
.metro {
  width: 68px;
}
.trio {
  display: flex;
  align-items: center;
  gap: 9px;
  height: 14px;
  color: #8a8a8a;
}
.trio svg {
  width: 10px;
  height: 10px;
}
.timing {
  width: 44px;
}
.key {
  width: 40px;
}
.tempo {
  width: 46px;
}
.out {
  display: grid;
  grid-template-columns: 61px 16px;
  gap: 7px;
  padding-left: 9px;
}
.bars {
  grid-column: 1 / 3;
  width: 61px;
  height: 9px;
  background: linear-gradient(#2b2e31 4px, #151515 4px, #151515 5px, #2b2e31 5px);
}
.vol {
  height: 9px;
  background: linear-gradient(90deg, transparent 46px, #272a2d 46px), repeating-linear-gradient(90deg, #4691b4 0 2px, #245068 2px 3px);
}
.out svg {
  width: 16px;
  height: 10px;
}
.views {
  display: flex;
  margin-left: auto;
  font-size: 11px;
}
.views button {
  width: 51px;
  border-left: 1px solid #7f9ccb;
}
.views button:last-child {
  width: 60px;
}
.views .active {
  background: #38b0ff;
  color: #fff;
}
```

FILE: script.js
```javascript
const icon = (name) => `<svg><use href="#i-${name}"/></svg>`;

// Toolbars
document.querySelectorAll('[data-tools]').forEach((bar) => {
  let html = `<button class="bracket" aria-label="Bracket">${icon('bracket')}</button>`;
  bar.dataset.tools.split(' ').forEach((name) => {
    if (name === '|') {
      html += '<hr>';
    } else {
      html += `<button class="${name === 'cursor' ? 'on' : ''}" aria-label="${name}">${icon(name)}</button>`;
    }
  });
  bar.innerHTML = html;
});

// Time scales: x of a bar inside its own view
const arrangeX = (bar) => 82 + (bar - 7) * 126;
const editorX = (bar) => (bar - 1) * 70.4;

function drawRuler(el, toX, first, last, step, loop, height) {
  const a = Math.max(0, toX(loop[0]));
  const b = toX(loop[1]);
  let html = `<rect x="${a}" y="0" width="${b - a}" height="${height}" fill="#2d5894"/>`;
  html += `<rect x="${a}" y="0" width="${b - a}" height="6" fill="#2fb1ff"/>`;
  html += `<path d="M${b} 6v8l-8-8z" fill="#2fb1ff"/>`;
  if (toX(loop[0]) > 0) html += `<path d="M${a} 6v8l8-8z" fill="#2fb1ff"/>`;
  for (let bar = first; bar <= last; bar += step) {
    const x = Math.round(toX(bar)) + 0.5;
    const whole = Number.isInteger(bar);
    html += `<line x1="${x}" x2="${x}" y1="${height - (whole ? 9 : 4)}" y2="${height}"/>`;
    if (whole) html += `<text x="${x + 1}" y="18">${bar}</text>`;
  }
  el.innerHTML = html;
}

function gridSvg(toX, first, last, step, loop) {
  const a = Math.max(0, toX(loop[0]));
  let html = `<svg class="grid"><rect x="${a}" width="${toX(loop[1]) - a}" height="100%" fill="#eeeff1"/>`;
  for (let bar = first; bar <= last; bar += step) {
    const x = Math.round(toX(bar)) + 0.5;
    html += `<line class="${Number.isInteger(bar) ? 'bar-line' : ''}" x1="${x}" x2="${x}" y1="0" y2="100%"/>`;
  }
  return html + '</svg>';
}

// Waveforms: [x, height] for each side of the two loop halves
const pushTop = [
  [0,35],[12,25],[22,68],[32,40],[39,60],[49,35],[60,80],[67,40],[74,70],[85,100],[95,40],[104,35],[112,55],[122,65],[129,85],[139,108],[147,85],[157,65],[167,30],[174,93],[182,40],[195,95],[205,75],[217,98],[227,40],[237,37],[249,70],[257,60],[267,15],[277,65],[282,120],[289,75],[299,65],[305,85],[317,45],[327,15],[343,75],[352,40],[367,65],[377,50],[393,110],[402,55],[409,80],[415,45]
];
const pushBottom = [
  [0,55],[12,35],[25,75],[37,50],[47,60],[57,40],[69,60],[77,90],[87,80],[97,50],[112,40],[122,65],[137,80],[150,80],[162,35],[177,60],[189,50],[202,95],[212,50],[232,55],[242,30],[257,55],[267,40],[284,105],[297,70],[307,55],[319,73],[327,35],[345,85],[357,45],[367,85],[377,60],[389,123],[399,55],[413,110],[415,60]
];
const pushTop2 = [
  [0,55],[14,85],[19,50],[29,120],[39,75],[54,70],[59,45],[76,85],[84,45],[99,25],[114,90],[127,95],[136,130],[144,75],[154,40],[168,80],[184,40],[201,105],[209,55],[224,110],[234,40],[242,120],[252,55],[264,65],[274,105],[284,110],[299,65],[314,70],[324,40],[336,110],[349,80],[359,65],[369,45],[379,35],[394,75],[406,25],[416,45]
];
const pushBottom2 = [
  [0,85],[12,65],[19,95],[29,133],[39,85],[49,45],[56,95],[66,40],[76,105],[84,50],[99,35],[114,60],[126,75],[139,120],[149,45],[159,40],[167,80],[179,60],[189,95],[202,50],[212,85],[221,145],[232,75],[244,50],[259,75],[276,95],[289,60],[304,40],[314,65],[324,55],[337,115],[349,65],[364,45],[376,85],[389,50],[397,85],[406,45],[416,35]
];

let seed = 7;
const random = () => {
  seed = (seed * 16807) % 2147483647;
  return seed / 2147483647;
};

function at(points, x) {
  const i = points.findIndex((p) => p[0] >= x);
  if (i <= 0) return points[i < 0 ? points.length - 1 : 0][1];
  const [x0, y0] = points[i - 1];
  const [x1, y1] = points[i];
  return y0 + ((y1 - y0) * (x - x0)) / (x1 - x0);
}

function wavePath(top, bottom, width, mid, scale, noise) {
  const steps = Math.round(width * 1.2);
  const up = [];
  const down = [];
  for (let i = 0; i <= steps; i++) {
    const u = (i / steps) * 415;
    const x = ((i / steps) * width).toFixed(1);
    up.push(`${x} ${(mid - at(top, u) * scale * (1.15 - noise * random())).toFixed(1)}`);
    down.unshift(`${x} ${(mid + at(bottom, u) * scale * (1.15 - noise * random())).toFixed(1)}`);
  }
  return `<path d="M${up.join('L')}L${down.join('L')}z"/>`;
}

const spark = Array.from({ length: 4 }, (_, i) => `<g transform="translate(${i * 94.4} 0)">
  <path d="M0 14L10 14 20 13 24 14 30 13 34 13 38 12 42 12 43 11 45 12V19L42 18 40 17 30 16 24 17 18 16 0 16z"/>
  <path d="M0 37L8 35 12 34 15 32 20 31 25 28 27 29 29 27 32 29 36 28 40 30 45 31V46L42 48 40 46 38 50 35 47 30 49 26 46 20 45 14 42 8 40 0 39z"/>
  <path d="M48 19L49 9 50 9 51 3 53 9 54 4 56 9 58 3 59 8 61 4 62 10 64 9 67 10 70 5 73 7 75 14 76 17 80 18 82 17 84 20 90 22 92 24V34L90 36 85 36 82 38 80 37 76 40 74 43 72 48 70 45 68 47 66 44 63 50 61 48 58 50 56 46 54 50 51 50 50 46 48 42z"/>
</g>`).join('');

const wings = [[0,0],[52,0],[54,4],[55,1],[57,6],[58,1],[61,6],[62,1],[65,5],[67,1],[70,6],[72,12],[73,3],[74,1],[76,6],[78,1],[80,3],[82,0],[85,2],[88,0],[92,1],[97,0],[133,0],[137,0],[139,1],[142,4],[144,1],[146,0],[158,0],[160,1],[162,3],[164,6],[166,2],[168,0],[219,0],[221,1],[222,8],[224,1],[225,0],[232,0],[234,1],[236,0],[308,0],[309,1],[310,10],[312,1],[313,0],[385,0],[387,5],[388,1],[390,1],[391,3],[393,0],[408,0],[410,5],[411,0],[480,0],[483,1],[486,4],[489,12],[491,5],[493,1],[496,0],[512,0],[513,3],[515,0],[560,0]];
const wingsPath = `<path d="M${wings.map(([x, y]) => `${x} ${28 - y}`).join('L')}L${[...wings].reverse().map(([x, y]) => `${x} ${28.4 + y}`).join('L')}z"/>`;

const line = (y) => `<path class="mid" d="M0 ${y}h2000v1H0z"/>`;
const fade = '<path d="M1 55L3 0M5 0L8 55" stroke="#0c2748" fill="none"/>';

const tracks = [
  { num: 117, name: 'P_WingsIn_1', type: 'wave', color: '#1560b8', child: true, muted: true, input: 'Input L', from: 75, events: [
    { at: 8.03, len: 0.055, cls: 'blue short', wave: line(28) + fade },
    { at: 8.155, len: 0.05, cls: 'blue short', wave: line(28) + fade },
    { at: 8.5, len: 0.125, cls: 'blue short', wave: line(28), tag: 'menu', full: true },
    { at: 14.37, len: 6, cls: 'blue', wave: wingsPath, tag: 'menu gear' }
  ] },
  { num: 118, name: 'P_WingsIn_2', type: 'wave', color: '#1560b8', child: true, muted: true, input: 'Input L', from: 75, events: [
    { at: 8, len: 0.085, cls: 'blue short', label: 'P', wave: line(27), tag: 'gear', full: true },
    { at: 8.15, len: 0.09, cls: 'blue short', label: 'P', wave: line(27) + fade, tag: 'gear', full: true },
    { at: 8.5, len: 0.125, cls: 'blue short', label: 'P_', wave: line(27), tag: 'menu', full: true },
    { at: 8.755, len: 0.24, cls: 'blue short', label: 'P_Win', wave: line(27), tag: 'gear' }
  ] },
  { num: 119, name: 'P_TurnOnSwitch', type: 'wave', color: '#0d6f97', input: 'Input L+R', stereo: true, from: 75, events: [] },
  { num: 120, name: 'Noise', type: 'keys', color: '#04b5c4', inst: 'Vital 13', from: 45, events: [{ at: 8.03, len: 0.245, cls: 'short', label: 'Track', wave: line(27) }] },
  { num: 121, name: 'Glass', type: 'keys', color: '#04b5c4', inst: 'Vital 14', from: 100, events: [{ at: 8.03, len: 0.245, cls: 'short', label: 'Track', wave: line(27) }] },
  { num: 122, name: 'P_Glide', type: 'keys', color: '#04b5c4', inst: 'Vital 15', from: 79, events: [{ at: 8, len: 4, label: 'Track 133', wave: line(36) }] },
  { num: 123, name: 'ElectricSpark', type: 'keys', color: '#04b5c4', inst: 'Vital 16', from: 100, events: [{ at: 8, len: 4, label: 'Track 133', wave: line(35) }] },
  { num: 124, name: 'ElectricSpark', type: 'wave', color: '#04df7c', input: 'Input L', from: 56, events: [{ at: 8, len: 3, cls: 'muted', label: 'ElectricSpark', wave: spark, tag: 'mute gear' }] },
  { num: 125, name: 'S_PushBlock', type: 'wave', color: '#04b5c4', input: 'Input L', from: 75, selected: true, events: [
    { at: 8, len: 2, cls: 'audio', label: 'S_PushBlock(2)', wave: wavePath(pushTop, pushBottom, 250, 27, 0.06, 0.9), tag: 'gear' },
    { at: 10, len: 2, cls: 'audio', label: 'S_PushBlock(2)', wave: wavePath(pushTop2, pushBottom2, 250, 27, 0.06, 0.9), tag: 'gear' }
  ] },
  { num: 126, name: 'P_TurnOffSwitch', type: 'wave', color: '#0d6f97', input: 'Input L+R', stereo: true, from: 75, events: [] }
];

function eventHtml(e, toX) {
  const tag = e.tag ? `<div class="event-tag ${e.full ? 'full' : ''}">${e.tag.split(' ').map(icon).join('')}</div>` : '';
  return `<div class="event ${e.cls || ''}" style="left:${Math.round(toX(e.at))}px;width:${Math.round(toX(e.at + e.len) - toX(e.at))}px">
    <svg class="wave">${e.wave}</svg>${e.label ? `<span class="event-label">${e.label}</span>` : ''}${tag}</div>`;
}

function trackHtml(t) {
  const stereo = '<svg viewBox="0 0 14 9"><circle cx="5" cy="4" r="4"/><circle cx="9" cy="4" r="3" fill="#c1c2c4" stroke="currentColor" stroke-width="1.500"/></svg>';
  const inputs = t.inst
    ? `<span class="pick inst">${icon('keys')}<select aria-label="Instrument"><option>${t.inst}</option></select></span>
       <span class="pick midi-out"><select aria-label="Output"><option>MIDI ..ut 1</option></select></span>`
    : `<span class="pick"><select aria-label="Input"><option>${t.input}</option></select></span>
       <button aria-label="Channels">${t.stereo ? stereo : '<i class="ring"></i>'}</button>`;
  return `<div class="track ${t.child ? 'child' : ''} ${t.selected ? 'selected' : ''}">
    <div class="stripe" style="background:${t.color}">${icon('curve')}</div>
    <b class="track-num">${t.num}</b>
    <div class="track-main">
      <div class="track-line">
        <div class="msrm"><button class="${t.muted ? 'muted' : ''}">M</button><button>S</button><button aria-label="Record"><i class="dot"></i></button><button aria-label="Monitor"><i class="half"></i></button></div>
        ${t.name}${icon(t.type)}
      </div>
      <input class="volume" type="range" aria-label="Volume" style="--from:${t.from}%">
      <div class="inputs">${inputs}</div>
    </div>
  </div>`;
}

drawRuler(document.getElementById('arrangeRuler'), arrangeX, 6.375, 18.875, 0.125, [5, 7], 31);
drawRuler(document.getElementById('editorRuler'), editorX, 1, 23.5, 0.25, [5, 7], 29);

document.getElementById('trackList').innerHTML = tracks.map(trackHtml).join('');
document.getElementById('lanes').innerHTML = gridSvg(arrangeX, 6.5, 19.5, 0.25, [5, 7]) +
  `<div class="lane-rows">${tracks.map((t) => `<div class="lane ${t.selected ? 'selected' : ''}">${t.events.map((e) => eventHtml(e, arrangeX)).join('')}</div>`).join('')}</div>`;

document.getElementById('editorLane').innerHTML = gridSvg(editorX, 1, 24, 0.25, [5, 7]) + [
  { at: 8, len: 2, cls: 'audio', label: 'S_PushBlock(2)', wave: wavePath(pushTop, pushBottom, 138, 153, 0.333, 0.45), tag: 'gear' },
  { at: 10, len: 2, cls: 'audio', label: 'S_PushBlock(2)', wave: wavePath(pushTop2, pushBottom2, 138, 153, 0.333, 0.45), tag: 'gear' }
].map((e) => eventHtml(e, editorX)).join('');

// Level scales: [label, offset from the top of the scale]
const levels = [['0dB', 1], ['-3.0', 43], ['-6.0', 75], ['-9.0', 97], ['-12.0', 113], ['-24.0', 141], ['-36.0', 148], ['-36.0', 155], ['-24.0', 162], ['-12.0', 190], ['-9.0', 206], ['-6.0', 228], ['-3.0', 260], ['0dB', 300]];
document.getElementById('dbScale').innerHTML = levels.map(([text, y]) => `<span style="top:${y}px">${text}</span>`).join('');

const faderMarks = [['10', 11], ['6', 23], ['0', 43], ['-6', 63], ['-12', 81], ['-24', 101], ['-36', 121], ['-48', 134], ['-72', 145]];
document.querySelector('.fader-scale').innerHTML = faderMarks.map(([text, y]) => `<span style="top:${y}px">${text}</span>`).join('');
```
